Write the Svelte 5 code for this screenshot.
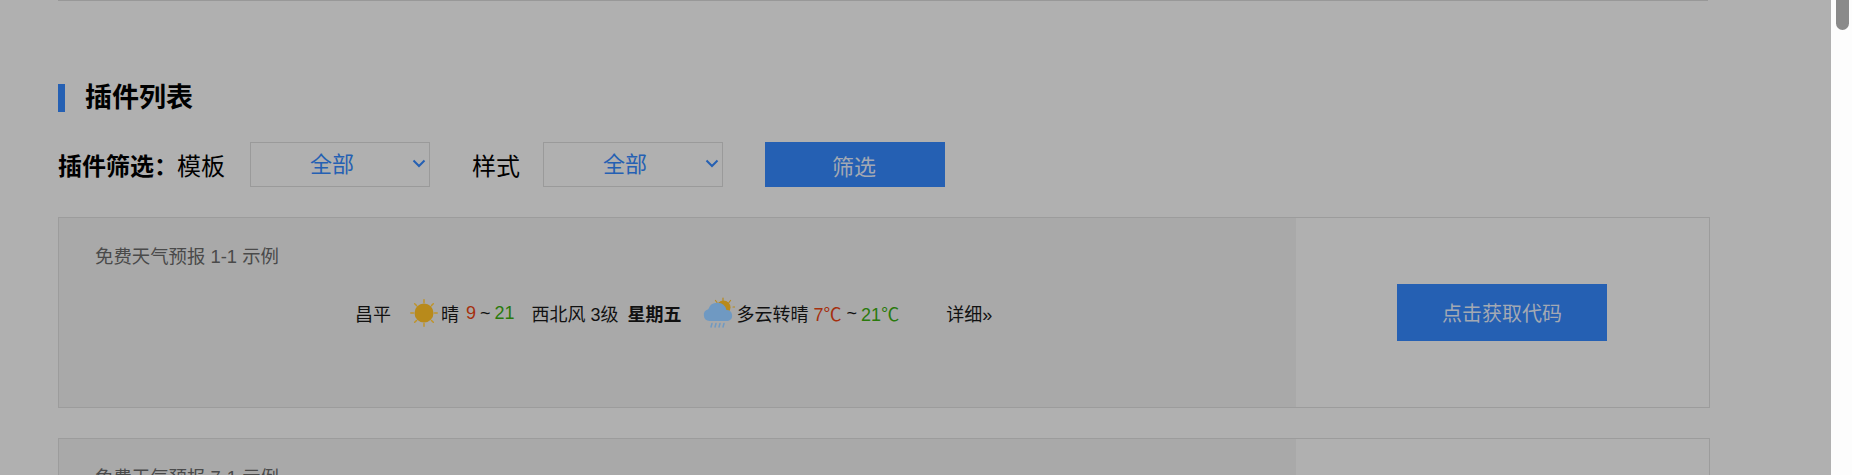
<script>
  let cards = [
    { title: '免费天气预报 1-1 示例', widget: true },
    { title: '免费天气预报 7-1 示例', widget: false }
  ];
</script>

<div class="page">
  <main>
    <div class="rule"></div>

    <h2>插件列表</h2>

    <form class="filter">
      <b>插件筛选：</b>
      <span class="lab">模板</span>
      <div class="sel">
        <select><option>全部</option></select>
        <svg class="chev" width="14" height="9" viewBox="0 0 14 9"><path d="M1.5 1.5 7 7l5.500-5.500" fill="none" stroke="#2560b3" stroke-width="2"/></svg>
      </div>
      <span class="lab second">样式</span>
      <div class="sel">
        <select><option>全部</option></select>
        <svg class="chev" width="14" height="9" viewBox="0 0 14 9"><path d="M1.5 1.500 7 7l5.500-5.500" fill="none" stroke="#2560b3" stroke-width="2"/></svg>
      </div>
      <button type="button" class="go">筛选</button>
    </form>

    {#each cards as card}
      <section class="card">
        <div class="left">
          <p class="name">{card.title}</p>
          {#if card.widget}
            <div class="weather">
              <span class="city">昌平</span>
              <svg class="ico sun" width="28" height="28" viewBox="0 0 28 28">
                <circle cx="14" cy="14" r="9.500" fill="#b88a1b"/>
                <g stroke="#c09428" stroke-width="1.500" stroke-linecap="round">
                  <path d="M14 .8v2.600M14 24.600v2.600M.8 14h2.600M24.600 14h2.600M4.700 4.700l1.800 1.800M21.500 21.500l1.800 1.800M4.700 23.300l1.800-1.800M21.500 6.500l1.800-1.800"/>
                </g>
              </svg>
              <span>晴</span>
              <span class="lo today">9</span><span class="tilde">~</span><span class="hi">21</span>
              <span class="wind">西北风 3级</span>
              <b class="day">星期五</b>
              <svg class="ico cloud" width="32" height="32" viewBox="0 0 32 32">
                <g stroke="#b88a1b" stroke-width="1.200" stroke-linecap="round">
                  <path d="M20 1v2.500M12.500 3.500l1.500 2M27.500 3.500l-1.500 2M30 10h2"/>
                </g>
                <circle cx="20.500" cy="10.500" r="7" fill="#b88a1b"/>
                <path d="M6.500 24a6 6 0 0 1-1.200-11.800A9.500 9.500 0 0 1 23.500 13a5.600 5.600 0 0 1 1.500 11z" fill="#6f99c2"/>
                <g stroke="#6f99c2" stroke-width="1.500" stroke-linecap="round">
                  <path d="M9 26.500l-1 3.500M13 26.500l-1 3.500M17 26.500l-1 3.500M21 26.500l-1 3.500"/>
                </g>
              </svg>
              <span>多云转晴</span>
              <span class="lo next">7℃</span><span class="tilde wide">~</span><span class="hi">21℃</span>
              <a class="more" href="#more">详细»</a>
            </div>
          {/if}
        </div>
        <div class="right">
          <button type="button" class="get">点击获取代码</button>
        </div>
      </section>
    {/each}
  </main>

  <aside class="scroll"><div class="thumb"></div></aside>
</div>

<style>
  :global(body) {
    margin: 0;
    overflow: hidden;
  }

  .page {
    display: flex;
    height: 475px;
    overflow: hidden;
    font-family: "Liberation Sans", "Noto Sans CJK SC", sans-serif;
    color: #000;
  }

  main {
    flex: 1;
    background: #b0b0b0;
    padding: 0 121px 0 58px;
  }

  .rule {
    height: 1px;
    width: 1650px;
    background: #989898;
  }

  h2 {
    margin: 83px 0 0;
    height: 28px;
    border-left: 7px solid #2560b3;
    padding-left: 20px;
    font-size: 27px;
    line-height: 28px;
    font-weight: 700;
  }

  .filter {
    display: flex;
    align-items: center;
    margin-top: 30px;
    height: 45px;
    font-size: 24px;
  }

  .filter b {
    flex: none;
    width: 119px;
    white-space: nowrap;
    font-size: 24px;
  }

  .lab {
    flex: none;
    width: 73px;
  }

  .lab.second {
    width: 71px;
    margin-left: 42px;
  }

  .sel {
    position: relative;
    flex: none;
    width: 180px;
    height: 45px;
  }

  select {
    appearance: none;
    width: 100%;
    height: 100%;
    box-sizing: border-box;
    border: 1px solid #9a9a9a;
    border-radius: 0;
    background: transparent;
    padding: 0 16px 0 0;
    text-align: center;
    font: inherit;
    font-size: 22px;
    color: #2560b3;
  }

  .chev {
    position: absolute;
    right: 4px;
    top: 17px;
  }

  .go {
    margin-left: 42px;
    width: 180px;
    height: 45px;
    border: 0;
    padding: 0 2px 0 0;
    background: #2560b3;
    color: #a3a9b3;
    font: inherit;
    font-size: 22px;
  }

  .card {
    display: flex;
    width: 1652px;
    height: 191px;
    box-sizing: border-box;
    margin-top: 30px;
    border: 1px solid #9c9c9c;
  }

  .left {
    width: 1237px;
    background: #a9a9a9;
  }

  .name {
    margin: 27px 0 0 36px;
    font-size: 18.4px;
    line-height: 24px;
    color: #4a4a4a;
  }

  .weather {
    display: flex;
    align-items: center;
    margin: 28px 0 0 296px;
    height: 32px;
    font-size: 18px;
    color: #111;
  }

  .ico {
    flex: none;
  }

  .sun {
    margin: 0 3px 0 19px;
  }

  .lo {
    color: #a5300e;
  }

  .hi {
    color: #2a7a0c;
  }

  .today {
    margin-left: 7px;
  }

  .next {
    margin-left: 5px;
  }

  .tilde {
    margin: 0 4px;
  }

  .tilde.wide {
    margin: 0 4px 0 5px;
  }

  .wind {
    margin-left: 17px;
  }

  .day {
    margin: 0 21px 0 9px;
  }

  .cloud {
    margin-right: 2px;
  }

  .more {
    margin-left: 47px;
    color: #111;
    text-decoration: none;
  }

  .right {
    flex: 1;
    display: flex;
    align-items: center;
    justify-content: center;
    padding-right: 1px;
  }

  .get {
    width: 210px;
    height: 57px;
    border: 0;
    background: #2560b3;
    color: #a3a9b3;
    font: inherit;
    font-size: 20px;
  }

  .scroll {
    width: 21px;
    background: #fdfdfd;
  }

  .thumb {
    width: 13px;
    height: 30px;
    margin-left: 5px;
    background: #8a8a8a;
    border-radius: 0 0 7px 7px;
  }
</style>
